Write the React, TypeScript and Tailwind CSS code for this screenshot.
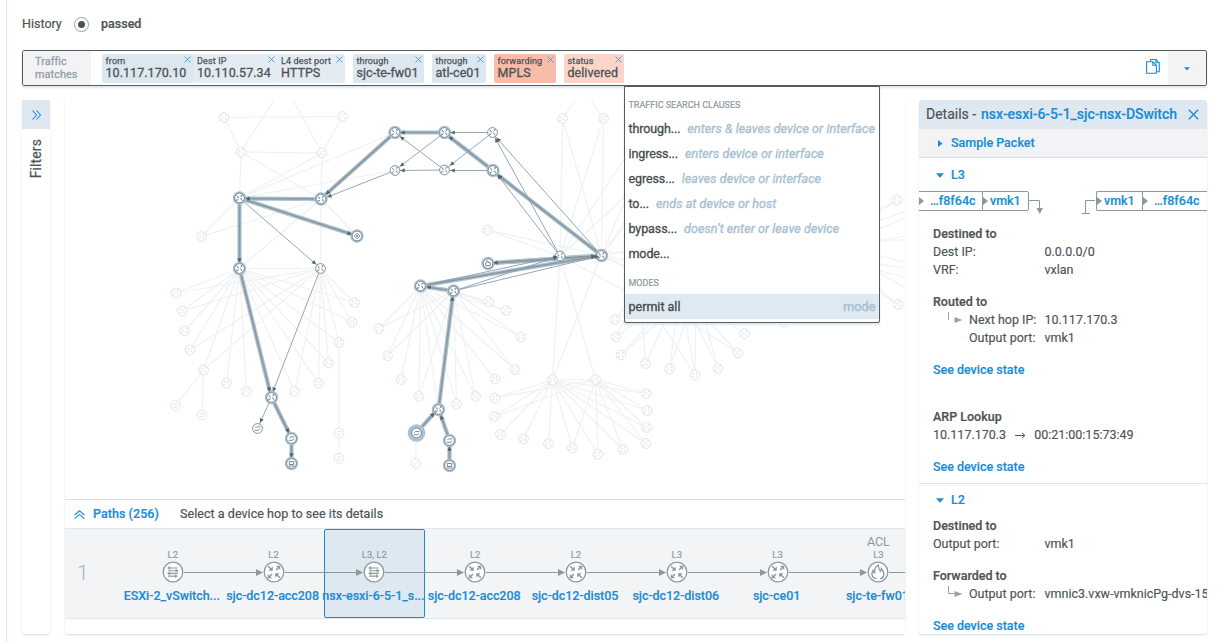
import React from "react";

type P = [number, number];

/* ---------- topology data ---------- */

const faintRouters: P[] = [
  [224, 117.5], [342.5, 116.5], [241, 152], [322, 153], [201.5, 236.5], [176, 293],
  [182, 311], [184.5, 331], [190, 350], [203.5, 370], [226.5, 383], [246.5, 391.5],
  [294.5, 391.5], [318.5, 383], [328.5, 363], [339, 342.5], [352, 322], [354.5, 302.5],
  [379, 328.5], [387.5, 355.5], [401, 379.5], [419, 396.5], [456.5, 404], [475.5, 396.5],
  [495, 379], [515, 369.5], [521, 337], [506, 310.5], [488.5, 301.5],
  [495, 398], [494.5, 416.5], [500.5, 434.5], [523.5, 439], [548.5, 443.5], [572.5, 448],
  [598, 454.5], [623, 449.5], [552.5, 380], [595.5, 379.5], [646.5, 393.5], [647, 410.5],
  [646.5, 427.5], [646, 443.5], [615, 319.5], [616, 337], [621, 355], [645.5, 363.5],
  [669.5, 369], [695, 375], [718, 368.5], [738, 353], [744.5, 333.5], [784, 322],
  [562.5, 118.5], [603.5, 118.5], [487.5, 230], [897, 200], [898, 304.5],
];
const faintSwitches: P[] = [[175.5, 405.5], [202, 415], [339, 433], [339, 458.5]];

const fan = (from: P, to: P[]): [P, P][] => to.map((t) => [from, t] as [P, P]);

const hubA: P = [239.5, 268.5];
const hubB: P = [320.5, 268.5];
const hubC: P = [420.5, 286];
const hubD: P = [453.5, 291];
const hubE: P = [552.5, 380];
const hubF: P = [595.5, 379.5];
const core: P = [601.5, 255.5];
const core2: P = [560, 256];

const faintLinks: [P, P][] = [
  [[224, 117.5], [342.5, 116.5]], [[224, 117.5], [241, 152]], [[342.5, 116.5], [322, 153]],
  [[241, 152], [322, 153]], [[241, 152], [274, 100]], [[322, 153], [293, 100]],
  [[241, 152], [239.5, 198]], [[322, 153], [321, 199]], [[241, 152], [321, 199]],
  [[322, 153], [239.5, 198]], [[239.5, 198], [395, 132.5]], [[239.5, 198], [395, 170.5]],
  [[239.5, 198], [201.5, 236.5]], [[321, 199], [201.5, 236.5]], [[321, 199], [357, 236]],
  [[321, 199], hubB], [[321, 199], hubA], [hubA, hubB],
  ...fan(hubA, [[176, 293], [182, 311], [184.5, 331], [190, 350], [203.5, 370], [226.5, 383], [246.5, 391.5], [294.5, 391.5], [318.5, 383], [328.5, 363], [339, 342.5], [352, 322], [354.5, 302.5]]),
  ...fan(hubB, [[176, 293], [182, 311], [190, 350], [203.5, 370], [294.5, 391.5], [318.5, 383], [328.5, 363], [339, 342.5], [352, 322], [354.5, 302.5]]),
  [[203.5, 370], [175.5, 405.5]], [[203.5, 370], [202, 415]],
  [[339, 342.5], [339, 433]], [[339, 433], [339, 458.5]], [[416, 433], [416, 463.5]],
  ...fan(hubC, [[379, 328.5], [387.5, 355.5], [401, 379.5], [419, 396.5], [438.5, 409.5], [456.5, 404], [475.5, 396.5], [495, 379], [515, 369.5], [521, 337], [506, 310.5], [488.5, 301.5]]),
  ...fan(hubD, [[379, 328.5], [387.5, 355.5], [419, 396.5], [456.5, 404], [475.5, 396.5], [515, 369.5], [521, 337], [506, 310.5], [488.5, 301.5]]),
  ...fan(hubE, [[495, 398], [494.5, 416.5], [500.5, 434.5], [523.5, 439], [548.5, 443.5], [572.5, 448], [598, 454.5], [623, 449.5], [646, 443.5], [646.5, 427.5], [647, 410.5], [646.5, 393.5], [595.5, 379.5]]),
  ...fan(hubF, [[495, 398], [494.5, 416.5], [572.5, 448], [598, 454.5], [623, 449.5], [646, 443.5], [646.5, 427.5], [647, 410.5], [646.5, 393.5]]),
  [hubE, core2], [hubE, core], [hubF, core2],
  [[562.5, 118.5], [575, 100]], [[603.5, 118.5], [591, 100]], [[562.5, 118.5], core2],
  [[562.5, 118.5], core], [[603.5, 118.5], core], [[603.5, 118.5], core2],
  [[487.5, 230], core2], [[487.5, 230], core],
  ...fan(core, [[640, 165], [650, 185], [645, 200], [640, 250], [640, 262], [700, 300], [640, 275]]),
  ...fan(core2, [[640, 135], [660, 165], [640, 262], [680, 320], [645, 250]]),
  ...fan([680, 290], [[615, 319.5], [616, 337], [621, 355], [645.5, 363.5], [669.5, 369], [695, 375], [718, 368.5], [738, 353], [744.5, 333.5]]),
  ...fan([640, 290], [[615, 319.5], [616, 337], [645.5, 363.5], [695, 375], [738, 353]]),
  ...fan([696, 290], [[621, 355], [669.5, 369], [695, 375], [718, 368.5], [784, 322]]),
  ...fan([820, 240], [[897, 200], [904, 212], [904, 240], [904, 262], [904, 287], [898, 304.5]]),
  ...fan([820, 255], [[897, 200], [904, 218], [904, 236], [904, 268], [904, 277], [898, 304.5]]),
];

const thinLinks: [P, P][] = [
  [[395, 170.5], [325, 198]], [[239.5, 198], [318, 266]], [hubB, [272, 394]],
  [[271.5, 397.5], [259, 425]], [[492.5, 132.5], [448, 132.5]], [[444.5, 132.5], [398, 168]],
  [[492.5, 132.5], [448, 167]], [[444.5, 170], [398, 135]], [[444.5, 170], [398, 170.5]],
  [[493, 170.5], [448, 170.5]], [core2, [494, 136]], [core, [495, 136]],
  [core2, [496, 173]], [hubD, core], [hubD, core2], [hubC, core2],
];

const boldLinks: [P, P][] = [
  [[395, 132.5], [324, 196]], [[444.5, 132.5], [398, 132.5]], [[493, 170.5], [447, 135]],
  [core, [496, 173.5]], [[321, 199], [243, 198.5]], [[239.5, 198], [354, 235]],
  [[239.5, 198], [239.5, 265]], [hubA, [270.5, 394]], [[271.5, 397.5], [290, 435]],
  [[291.5, 438.5], [291.5, 460]], [core, [491, 263]], [[488, 263.5], [598, 256]],
  [hubC, [598, 256]], [hubD, [424, 286.5]], [[438.5, 409.5], [453, 294]],
  [[416.5, 433], [436, 411]], [[449.5, 440.5], [440, 413]], [[449.5, 465.5], [449.5, 444]],
];

const activeRouters: P[] = [
  [395, 132.5], [444.5, 132.5], [493, 170.5], [239.5, 198], [321, 199], hubA,
  [271.5, 397.5], core, hubC, hubD, [438.5, 409.5],
];
const plainRouters: P[] = [[492.5, 132.5], [395, 170.5], [444.5, 170], hubB, core2];

/* ---------- topology drawing ---------- */

function MiniNode({ at, kind, tone, halo }: { at: P; kind: string; tone: string; halo?: boolean }) {
  return (
    <g transform={`translate(${at[0]} ${at[1]})`} fill="none" stroke={tone}>
      {halo && <circle r="6.7" fill="#aac3d5" stroke="none" />}
      <circle r="4.9" fill="#fff" strokeWidth="1" />
      {kind === "router" && (
        <path strokeWidth="1" d="M-3-2.6l1.8 1.6M2.9-2.9L1-1M-2.9 2.9L-1 1M3 2.6L1.2 1M-2.2-.6h1.4M1.2-2.8h1.6M1 .8h1.4M-2.8 1.2v1.6" />
      )}
      {kind === "switch" && <path strokeWidth="1" d="M-2.8 1.8h4M-1.2-1.6h4M-2.4-.2l1.2-1.2M2.4.2L1.2 1.6" />}
      {kind === "host" && <path strokeWidth="1" d="M-2.2-2h4.4v3h-4.4zM-3 2.500h6" />}
      {kind === "hub" && <path strokeWidth="1" d="M0-2.8L2.8 0 0 2.8-2.8 0zM-1 0h2M0-1v2" />}
      {kind === "fire" && <path strokeWidth="1" d="M-2.2 2C-3.4-.2-1.5-.6-1-3 .6-2 .4-.6.9-.4c.4-.2.4-.7.5-1.2C3 0 2.6 1.4 1.9 2.2z" />}
      {kind === "none" && <path strokeWidth="1" d="M-3 3L3-3" />}
    </g>
  );
}

function Topology() {
  return (
    <svg className="block h-[400px] w-[840px] shrink-0" viewBox="65 99 840 400">
      <defs>
        <marker id="tip" markerUnits="userSpaceOnUse" markerWidth="6" markerHeight="6" refX="5" refY="3" orient="auto">
          <path d="M0.9 0.9L5.1 3L0.9 5.1z" fill="#566064" />
        </marker>
      </defs>
      {faintLinks.map(([a, b], i) => (
        <line key={i} x1={a[0]} y1={a[1]} x2={b[0]} y2={b[1]} stroke="#f0f1f4" strokeWidth="1.2" />
      ))}
      {boldLinks.map(([a, b], i) => (
        <line key={i} x1={a[0]} y1={a[1]} x2={b[0]} y2={b[1]} stroke="#aac3d5" strokeWidth="4.2" />
      ))}
      {boldLinks.map(([a, b], i) => (
        <line key={i} x1={a[0]} y1={a[1]} x2={b[0]} y2={b[1]} stroke="#8c989e" strokeWidth="1.7" />
      ))}
      {thinLinks.map(([a, b], i) => (
        <line key={i} x1={a[0]} y1={a[1]} x2={b[0]} y2={b[1]} stroke="#8a9dac" strokeWidth="0.9" />
      ))}
      {faintRouters.map((p, i) => <MiniNode key={i} at={p} kind="router" tone="#e0e5ec" />)}
      {faintSwitches.map((p, i) => <MiniNode key={i} at={p} kind="switch" tone="#e0e5ec" />)}
      <MiniNode at={[416, 463.5]} kind="none" tone="#dde4ed" />
      {plainRouters.map((p, i) => <MiniNode key={i} at={p} kind="router" tone="#82929b" />)}
      <MiniNode at={[257.5, 428.5]} kind="switch" tone="#82929b" />
      {activeRouters.map((p, i) => <MiniNode key={i} at={p} kind="router" tone="#77868f" halo />)}
      <MiniNode at={[291.5, 438.5]} kind="switch" tone="#77868f" halo />
      <MiniNode at={[291.5, 463.5]} kind="host" tone="#77868f" halo />
      <MiniNode at={[357, 236]} kind="hub" tone="#77868f" halo />
      <MiniNode at={[488, 263.5]} kind="fire" tone="#77868f" halo />
      <MiniNode at={[449.5, 440.5]} kind="switch" tone="#77868f" halo />
      <MiniNode at={[449.5, 465.5]} kind="host" tone="#77868f" halo />
      <circle cx="416.5" cy="433" r="8.8" fill="#aac3d5" />
      <MiniNode at={[416.5, 433]} kind="switch" tone="#77868f" halo />
      {[...boldLinks, ...thinLinks].map(([a, b], i) => {
        const d = Math.hypot(b[0] - a[0], b[1] - a[1]);
        const k = (d - 2.6) / d;
        return (
          <line key={i} x1={a[0]} y1={a[1]} x2={a[0] + (b[0] - a[0]) * k} y2={a[1] + (b[1] - a[1]) * k} stroke="none" markerEnd="url(#tip)" />
        );
      })}
    </svg>
  );
}

/* ---------- search bar ---------- */

function Cross({ className }: { className: string }) {
  return (
    <svg className={className} viewBox="0 0 8 8">
      <path d="M.6.6l6.8 6.8M7.4.6L.6 7.4" stroke="currentColor" strokeWidth="1" fill="none" />
    </svg>
  );
}

const chipBlue = "bg-[#dde7f0]";
const chipRed = "bg-[#f8bda9]";
const chipRedSoft = "bg-[#fbd5c8]";
const chipSoft = "bg-[#e4ebf2]";

function Chip({ label, value, tone, size }: { label: string; value: string; tone: string; size: string }) {
  return (
    <div className={`relative flex h-[29px] shrink-0 flex-col rounded-[2px] pl-[3.5px] ${tone} ${size}`}>
      <div className="h-[12px] whitespace-nowrap text-[9px] leading-[14px] tracking-[0.15px] text-[#4d5356] [-webkit-text-stroke:0.25px_currentColor]">{label}</div>
      <div className="whitespace-nowrap text-[12.5px] leading-[14px] tracking-[0.05px] text-[#4d5356] [-webkit-text-stroke:0.3px_currentColor]">{value}</div>
      <Cross className="absolute top-[2px] right-[2.5px] h-[7px] w-[7px] text-[#3b9bd9]" />
    </div>
  );
}

function SearchBar() {
  return (
    <div className="flex h-[36px] w-[1185px] items-center rounded-[2px] border border-[#555b5d] bg-white shadow-[0_2px_2px_#dde7f0]">
      <div className="flex h-full w-[68px] flex-col justify-center bg-[#f3f3f6] pl-3 text-[10.8px] leading-[13px] tracking-[0.1px] text-[#93a0a7] [-webkit-text-stroke:0.3px_currentColor]">
        <span>Traffic</span>
        <span>matches</span>
      </div>
      <div className="flex pl-[11px]">
        <Chip label="from" value="10.117.170.10" tone={chipBlue} size="w-[91.5px]" />
        <Chip label="Dest IP" value="10.110.57.34" tone={chipSoft} size="w-[84px]" />
        <Chip label="L4 dest port" value="HTTPS" tone={chipSoft} size="w-[67.5px]" />
      </div>
      <div className="flex gap-2 pl-2">
        <Chip label="through" value="sjc-te-fw01" tone={chipBlue} size="w-[71px]" />
        <Chip label="through" value="atl-ce01" tone={chipBlue} size="w-[54px]" />
        <Chip label="forwarding" value="MPLS" tone={chipRed} size="w-[62px]" />
        <Chip label="status" value="delivered" tone={chipRedSoft} size="w-[60px]" />
      </div>
      <div className="flex-1" />
      <svg className="-mt-[3px] mr-[8px] h-[15px] w-[14px]" viewBox="0 0 14 16" preserveAspectRatio="none" fill="none" stroke="#1a8cd4" strokeWidth="1.1">
        <path d="M4.6 3V.6h5.2l3.500 3.500v9.600h-2.800" />
        <path d="M.6 3h6.2l3.6 3.6v8.7H.6z" />
        <path d="M6.8 3v3.6h3.6M9.8.6v3.500h3.500" />
      </svg>
      <div className="flex h-full w-[38px] items-center justify-center bg-[#f3f3f6]">
        <svg className="mt-[2px] h-1 w-[6px]" viewBox="0 0 6 4"><path d="M0 .3h6L3 3.5z" fill="#1a8cd4" /></svg>
      </div>
    </div>
  );
}

/* ---------- suggestion menu ---------- */

const clauses = [
  { key: "through...", hint: "enters & leaves device or interface" },
  { key: "ingress...", hint: "enters device or interface" },
  { key: "egress...", hint: "leaves device or interface" },
  { key: "to...", hint: "ends at device or host" },
  { key: "bypass...", hint: "doesn’t enter or leave device" },
  { key: "mode...", hint: "" },
];

function Menu() {
  return (
    <div className="absolute top-[85px] left-[624px] z-10 h-[238px] w-[256px] rounded-[2px] border border-t-2 border-[#555b5d] bg-white text-[12.5px] text-[#454b4e] shadow-[0_2px_2px_#dde7f0]">
      <div className="h-[30px] pt-[11px] pl-[3.5px] text-[9px] leading-[14px] text-[#8b989f] [-webkit-text-stroke:0.2px_currentColor]">TRAFFIC SEARCH CLAUSES</div>
      {clauses.map((c) => (
        <div key={c.key} className="flex h-[25px] items-center gap-[7px] pl-[3.5px] whitespace-nowrap [-webkit-text-stroke:0.3px_currentColor]">
          <span className="tracking-[-0.1px]">{c.key}</span>
          <span className="tracking-[0.08px] text-[#a9c1d3] italic [-webkit-text-stroke:0.4px_currentColor]">{c.hint}</span>
        </div>
      ))}
      <div className="h-[27px] pt-[9px] pl-[3.5px] text-[9px] leading-[14px] text-[#8b989f] [-webkit-text-stroke:0.2px_currentColor]">MODES</div>
      <div className="flex h-[25px] items-center justify-between bg-[#dfe9f1] pt-[1.5px] pr-[3.5px] pl-[3.5px] [-webkit-text-stroke:0.3px_currentColor]">
        <span>permit all</span>
        <span className="tracking-[0.15px] text-[#a9c1d3] [-webkit-text-stroke:0.5px_currentColor]">mode</span>
      </div>
    </div>
  );
}

/* ---------- path strip ---------- */

const hops = [
  { name: "ESXi-2_vSwitch...", layer: "L2", icon: "switch", top: "" },
  { name: "sjc-dc12-acc208", layer: "L2", icon: "router", top: "" },
  { name: "nsx-esxi-6-5-1_s...", layer: "L3, L2", icon: "switch", top: "" },
  { name: "sjc-dc12-acc208", layer: "L2", icon: "router", top: "" },
  { name: "sjc-dc12-dist05", layer: "L2", icon: "router", top: "" },
  { name: "sjc-dc12-dist06", layer: "L3", icon: "router", top: "" },
  { name: "sjc-ce01", layer: "L3", icon: "router", top: "" },
  { name: "sjc-te-fw01", layer: "L3", icon: "fire", top: "ACL" },
];

function HopIcon({ kind }: { kind: string }) {
  return (
    <svg className="h-[22px] w-[22px] shrink-0" viewBox="-11 -11 22 22" fill="none" stroke="#8b999f" strokeWidth="1.2">
      <circle r="9.8" fill="#fff" strokeWidth="1.3" />
      {kind === "router" && (
        <g>
          <path d="M-5.800-5.800L-2.500-2.500M2-2L5.500-5.500M-2 2L-5.500 5.500M5.800 5.800L2.500 2.500" strokeWidth="1.5" />
          <path d="M-1.200-1.200v-4.400l-4.400 4.400zM6.300-6.300v4.400l-4.400-4.400zM-6.300 6.300v-4.400l4.400 4.400zM1.200 1.200v4.400l4.400-4.400z" fill="#8b999f" stroke="none" />
        </g>
      )}
      {kind === "switch" && (
        <g>
          <path d="M-3.500-4h8M-5-1.300h8M-3 1.400h8M-5 4.100h7.500" strokeWidth="1.1" />
          <path d="M-2.800-5.900v3.800l-3-1.900zM2.600-3.200v3.800l3.200-1.900zM-2.800-.5v3.800l-3.200-1.900zM2 2.200V6l3-1.900z" fill="#8b999f" stroke="none" />
        </g>
      )}
      {kind === "fire" && (
        <path d="M-1.800 6.800C-6.800 5.600-6.600 1-5-1.600c.2 1.400.8 2.200 1.800 2.400C-3.800-2.800-2-5.600.4-7c-.4 3 .8 4.600 2 6.400.8-.8 1-1.600.8-3C6.600-.8 7.400 5.400 2 6.800" strokeWidth="1.3" />
      )}
    </svg>
  );
}

function Paths() {
  return (
    <div className="flex h-[135px] w-[840px] flex-col overflow-hidden border-t border-[#e3dee3] bg-white">
      <div className="flex h-[28px] items-center text-[12.5px] [-webkit-text-stroke:0.2px_currentColor]">
        <svg className="ml-[9px] h-[9px] w-[11px]" viewBox="0 0 11 9" fill="none" stroke="#1a8cd4" strokeWidth="1.1">
          <path d="M.6 5L5.5.8 10.4 5M.6 8.6l4.9-4.2 4.9 4.2" />
        </svg>
        <span className="ml-2 w-[87px] font-medium tracking-[0.05px] text-[#1a8cd4]">Paths (256)</span>
        <span className="tracking-[0.05px] text-[#4d5356]">Select a device hop to see its details</span>
      </div>
      <div className="flex h-[91px] border-y border-[#dfe8f0] bg-[#f3f4f6]">
        <div className="flex w-[57.4px] shrink-0 items-center pl-3 text-[21px] font-light text-[#a3b5c3]">1</div>
        {hops.map((h, i) => (
          <div
            key={i}
            className={`box-border flex w-[100.8px] shrink-0 flex-col items-center rounded-[2px] border ${i === 2 ? "border-[#1a8cd4] bg-[#dde8f1]" : "border-transparent"}`}
          >
            <div className="h-[18px] pt-[3px] text-[12.5px] leading-[18px] text-[#8b999f]">{h.top}</div>
            <div className="h-[13px] text-[9.5px] leading-[13px] text-[#8b999f] [-webkit-text-stroke:0.15px_currentColor]">{h.layer}</div>
            <div className="flex w-[101px] items-center">
              <div className="flex flex-1 items-center">
                {i > 0 && <div className="h-px flex-1 bg-[#8b999f]" />}
                {i > 0 && <svg className="h-[7px] w-[7px]" viewBox="0 0 7 7"><path d="M0 0l7 3.5L0 7z" fill="#8b999f" /></svg>}
              </div>
              <HopIcon kind={h.icon} />
              <div className="h-px flex-1 bg-[#8b999f]" />
            </div>
            <div className="mt-[4px] -ml-[2px] text-center text-[12.5px] leading-[18px] font-medium tracking-[-0.05px] whitespace-nowrap text-[#1a8cd4] [-webkit-text-stroke:0.15px_currentColor]">{h.name}</div>
          </div>
        ))}
      </div>
    </div>
  );
}

/* ---------- details ---------- */

function Row({ label, value, indent }: { label: string; value: string; indent?: boolean }) {
  return (
    <div className="flex h-[18px] items-center whitespace-nowrap">
      <span className={indent ? "w-[75.5px]" : "w-[111.5px]"}>{label}</span>
      <span>{value}</span>
    </div>
  );
}

function Elbow({ full }: { full?: boolean }) {
  return (
    <svg className="ml-[15px] h-[18px] w-[21px] shrink-0" viewBox="0 0 21 18">
      <path d={full ? "M.5 1v7.5h7" : "M.5 1v8"} stroke="#9aa5aa" fill="none" />
      <path d="M6.5 6l8 3-8 3z" fill="#9aa5aa" />
    </svg>
  );
}

function Link() {
  return <div className="flex h-[18px] items-center font-medium tracking-[-0.02px] text-[#1a8cd4]">See device state</div>;
}

function Heading({ children }: { children: string }) {
  return <div className="flex h-[18px] items-center font-medium [-webkit-text-stroke:0.2px_currentColor]">{children}</div>;
}

function Tri() {
  return <svg className="h-[5px] w-[8px]" viewBox="0 0 8 5"><path d="M0 .3h8L4 4.7z" fill="#1a8cd4" /></svg>;
}

function Details() {
  return (
    <div className="flex h-[534px] w-[288px] flex-col overflow-hidden rounded-[3px] bg-white text-[12.5px] text-[#4d5356] shadow-[0_1px_2px_#cfdce8] [-webkit-text-stroke:0.15px_currentColor]">
      <div className="flex h-[29px] shrink-0 items-center bg-[#dfe8f0] pl-[7px] text-[14px] whitespace-nowrap">
        <span className="w-[55px]">Details -</span>
        <span className="font-medium tracking-[-0.05px] text-[#1a8cd4]">nsx-esxi-6-5-1_sjc-nsx-DSwitch</span>
        <Cross className="mr-2 ml-auto h-[11px] w-[11px] text-[#1a8cd4]" />
      </div>
      <div className="flex h-[29px] shrink-0 items-center border-b border-[#d5dce2] bg-[#f3f3f6] pl-[19px] font-medium text-[#1a8cd4]">
        <svg className="mr-[8px] h-[7px] w-[5px]" viewBox="0 0 5 7"><path d="M0 0l4.5 3.5L0 7z" fill="#1a8cd4" /></svg>
        Sample Packet
      </div>
      <div className="flex h-[33px] shrink-0 items-center gap-[7px] pt-[1px] pl-[17px] font-medium text-[#1a8cd4]"><Tri />L3</div>
      <div className="flex h-[24px] shrink-0 items-start font-medium whitespace-nowrap text-[#1a8cd4]">
        <div className="flex h-[20px] w-[63px] items-center border-y border-[#8b999f]">
          <svg className="mr-[6px] h-[8px] w-[5px]" viewBox="0 0 5 8"><path d="M0 0l5 4-5 4z" fill="#8b999f" /></svg>…f8f64c
        </div>
        <div className="flex h-[20px] w-[47px] items-center rounded-r-[2px] border border-[#8b999f]">
          <svg className="mr-[2px] h-[8px] w-[5px]" viewBox="0 0 5 8"><path d="M0 0l5 4-5 4z" fill="#8b999f" /></svg>vmk1
        </div>
        <svg className="h-[24px] w-[67px]" viewBox="0 0 67 24" fill="none" stroke="#8b999f">
          <path d="M0 9.5h10.5V18M66 9.5H56.500V22M53 22.500h8" />
          <path d="M7.500 17h6.500l-3.200 6z" fill="#8b999f" stroke="none" />
        </svg>
        <div className="flex h-[20px] w-[46px] items-center rounded-l-[2px] border border-r-0 border-[#8b999f]">
          <svg className="mr-[2px] h-[8px] w-[5px]" viewBox="0 0 5 8"><path d="M0 0l5 4-5 4z" fill="#8b999f" /></svg>vmk1
        </div>
        <div className="flex h-[20px] flex-1 items-center border-y border-l border-[#8b999f]">
          <svg className="mr-[6px] h-[8px] w-[5px]" viewBox="0 0 5 8"><path d="M0 0l5 4-5 4z" fill="#8b999f" /></svg>…f8f64c
        </div>
      </div>
      <div className="flex h-[268px] shrink-0 flex-col pl-[14px]">
        <div className="mt-[10px]"><Heading>Destined to</Heading></div>
        <Row label="Dest IP:" value="0.0.0.0/0" />
        <Row label="VRF:" value="vxlan" />
        <div className="mt-[14px]"><Heading>Routed to</Heading></div>
        <div className="flex">
          <Elbow />
          <div><Row indent label="Next hop IP:" value="10.117.170.3" /><Row indent label="Output port:" value="vmk1" /></div>
        </div>
        <div className="mt-[14px]"><Link /></div>
        <div className="mt-[29px]"><Heading>ARP Lookup</Heading></div>
        <div className="flex h-[18px] items-center">
          <span>10.117.170.3</span>
          <svg className="mr-[8px] ml-[9px] h-[7px] w-[11px]" viewBox="0 0 11 7" fill="none" stroke="#4d5356"><path d="M0 3.500h9M7 1l3 2.500L7 6" /></svg>
          <span>00:21:00:15:73:49</span>
        </div>
        <div className="mt-[14px]"><Link /></div>
      </div>
      <div className="flex h-[34px] shrink-0 items-center gap-[7px] border-t border-[#dde7f0] pl-[17px] font-medium text-[#1a8cd4]"><Tri />L2</div>
      <div className="flex flex-col pl-[14px]">
        <Heading>Destined to</Heading>
        <Row label="Output port:" value="vmk1" />
        <div className="mt-[14px]"><Heading>Forwarded to</Heading></div>
        <div className="flex"><Elbow full /><Row indent label="Output port:" value="vmnic3.vxw-vmknicPg-dvs-15" /></div>
        <div className="mt-[14px]"><Link /></div>
      </div>
    </div>
  );
}

export default function App() {
  return (
    <div className="relative h-[642px] w-[1217px] overflow-hidden bg-white pl-[6px] font-[Roboto,'Liberation_Sans',sans-serif]">
      <div className="flex h-full flex-col border-l border-[#dbe6f0] pl-[15px]">
        <div className="flex h-[50px] items-center pb-[2px] text-[12.5px] text-[#4d5356] [-webkit-text-stroke:0.2px_currentColor]">
          <span className="w-[52px]">History</span>
          <span className="mr-3 flex h-[15px] w-[15px] items-center justify-center rounded-full border border-[#91a3b1]">
            <span className="h-[7px] w-[7px] rounded-full bg-[#4d5356]" />
          </span>
          <span className="font-medium">passed</span>
        </div>
        <SearchBar />
        <div className="flex pt-[13px]">
          <div className="mt-[1px] flex h-[534px] w-[28px] flex-col items-center rounded-[3px] bg-white shadow-[0_1px_2px_#cfdce8]">
            <div className="flex h-[29px] w-full items-center justify-center bg-[#dfe8f0]">
              <svg className="h-[10px] w-[9px]" viewBox="0 0 9 10" fill="none" stroke="#1a8cd4" strokeWidth="1.1"><path d="M.5.500L4.500 5 .5 9.500M4.500.500L8.500 5l-4 4.500" /></svg>
            </div>
            <div className="mt-[10px] rotate-180 text-[14px] leading-[20px] tracking-[0.1px] text-[#4d5356] [writing-mode:vertical-rl] [-webkit-text-stroke:0.2px_currentColor]">Filters</div>
          </div>
          <div className="ml-[15px] flex h-[535px] w-[840px] flex-col rounded-[3px] shadow-[0_1px_2px_#cfdce8]">
            <Topology />
            <Paths />
          </div>
          <div className="mt-[1px] ml-[14px]"><Details /></div>
        </div>
      </div>
      <Menu />
    </div>
  );
}
